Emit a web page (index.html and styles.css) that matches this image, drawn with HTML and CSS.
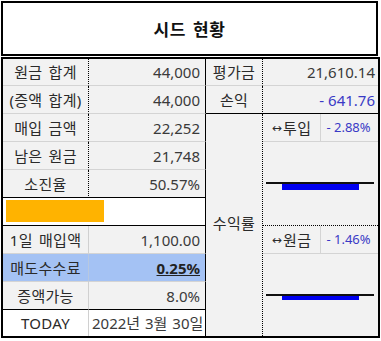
FILE: index.html
```html
<!DOCTYPE html>
<html lang="ko">
<head>
<meta charset="utf-8">
<title>시드 현황</title>
<link rel="stylesheet" href="styles.css">
</head>
<body>
<div class="title">시드 현황</div>
<div class="sheet">
  <div class="c lbl">원금 합계</div>
  <div class="c num">44,000</div>
  <div class="c lbl3">평가금</div>
  <div class="c val">21,610.14</div>

  <div class="c lbl">(증액 합계)</div>
  <div class="c num">44,000</div>
  <div class="c lbl3 thick">손익</div>
  <div class="c val thick blue">- 641.76</div>

  <div class="c lbl">매입 금액</div>
  <div class="c num">22,252</div>
  <div class="c yield">수익률</div>
  <div class="c tag"><span class="arrow">↔</span>투입</div>
  <div class="c pct">- 2.88%</div>

  <div class="c lbl">남은 원금</div>
  <div class="c num">21,748</div>
  <div class="c chart first">
    <div class="axis"></div>
    <div class="bar"></div>
  </div>

  <div class="c lbl dark-b">소진율</div>
  <div class="c num dark-b">50.57%</div>

  <div class="c progress"><div class="fill"></div></div>

  <div class="c lbl2">1일 매입액</div>
  <div class="c num">1,100.00</div>
  <div class="c tag"><span class="arrow">↔</span>원금</div>
  <div class="c pct">- 1.46%</div>

  <div class="c lbl2 hl">매도수수료</div>
  <div class="c num hl"><span class="fee">0.25%</span></div>
  <div class="c chart second">
    <div class="axis"></div>
    <div class="bar thin"></div>
  </div>

  <div class="c lbl2 dark-b">증액가능</div>
  <div class="c num dark-b">8.0%</div>

  <div class="c lbl2 white last">TODAY</div>
  <div class="c num white last date">2022년 3월 30일</div>
</div>
</body>
</html>
```
FILE: styles.css
```css
html, body {
  margin: 0;
  padding: 0;
  background: #ffffff;
}

body {
  font-family: "Noto Sans", "Noto Sans CJK KR", sans-serif;
  color: #333333;
}

.title {
  box-sizing: border-box;
  width: 377px;
  height: 55px;
  margin: 1px 0 0 1px;
  border: 2px solid #000000;
  background: #ffffff;
  display: flex;
  align-items: center;
  justify-content: center;
  font-family: "Noto Sans CJK KR", sans-serif;
  font-weight: 700;
  font-size: 17px;
  letter-spacing: 0.5px;
  word-spacing: 2px;
  color: #111111;
}

.sheet {
  box-sizing: border-box;
  width: 379px;
  margin: 1px 0 0 1px;
  border: 2px solid #000000;
  display: grid;
  grid-template-columns: 86px 117px 57px 58px 57px;
  grid-template-rows: 27px repeat(8, 28px) 26px;
}

.c {
  box-sizing: border-box;
  display: flex;
  align-items: center;
  background: #f2f2f2;
  border-bottom: 1px solid #d4d4d4;
  font-size: 15px;
  line-height: 1.2;
  white-space: nowrap;
  overflow: hidden;
}

.lbl,
.lbl2,
.lbl3,
.yield,
.tag {
  word-spacing: 2px;
  letter-spacing: 0.3px;
}

.lbl {
  justify-content: center;
  border-right: 1px dotted #000000;
  color: #2a2a2a;
}

.lbl2 {
  justify-content: center;
  border-right: 1px solid #d0d0d0;
  color: #2a2a2a;
}

.num {
  justify-content: flex-end;
  padding-right: 5px;
  border-right: 1px solid #000000;
  color: #3a3a3a;
}

.lbl3 {
  justify-content: center;
  border-right: 1px dotted #000000;
  color: #2a2a2a;
}

.val {
  grid-column: span 2;
  justify-content: flex-end;
  padding-right: 3px;
  color: #3a3a3a;
}

.thick {
  border-bottom: 1px solid #000000;
}

.blue {
  color: #3a3ac6;
}

.yield {
  grid-row: span 8;
  justify-content: center;
  border-right: 1px dotted #000000;
  border-bottom: none;
  color: #2a2a2a;
  padding-bottom: 4px;
}

.tag {
  justify-content: center;
  border-right: 1px solid #d4d4d4;
  color: #2a2a2a;
}

.arrow {
  font-family: "DejaVu Sans", sans-serif;
  font-size: 12px;
  margin-right: 1px;
  position: relative;
  top: 1px;
}

.pct {
  justify-content: center;
  font-size: 13px;
  color: #3a3ac6;
  padding-right: 2px;
}

.chart {
  grid-column: span 2;
  grid-row: span 3;
  flex-direction: column;
  align-items: flex-start;
  justify-content: flex-start;
  padding-top: 40px;
}

.chart.first {
  border-bottom: 1px dotted #000000;
}

.chart.second {
  border-bottom: none;
}

.axis {
  width: 108px;
  height: 2px;
  margin-left: 3px;
  background: #111111;
}

.bar {
  width: 77px;
  height: 6px;
  margin-left: 19px;
  background: #0000f0;
}

.bar.thin {
  height: 4px;
}

.dark-b {
  border-bottom: 1px solid #000000;
}

.progress {
  grid-column: span 2;
  align-items: flex-start;
  background: #ffffff;
  border-right: 1px solid #000000;
  border-bottom: 1px solid #000000;
}

.fill {
  width: 98px;
  height: 22px;
  margin: 2px 0 0 3px;
  background: #ffb300;
}

.hl {
  background: #a4c2f4;
}

.lbl2.hl {
  border-right-color: #b8c8e0;
}

.fee {
  font-weight: 700;
  text-decoration: underline;
  color: #222222;
}

.white {
  background: #ffffff;
}

.last {
  border-bottom: none;
}

.date {
  justify-content: flex-start;
  padding-left: 3px;
  padding-right: 0;
  word-spacing: 1px;
}
```
